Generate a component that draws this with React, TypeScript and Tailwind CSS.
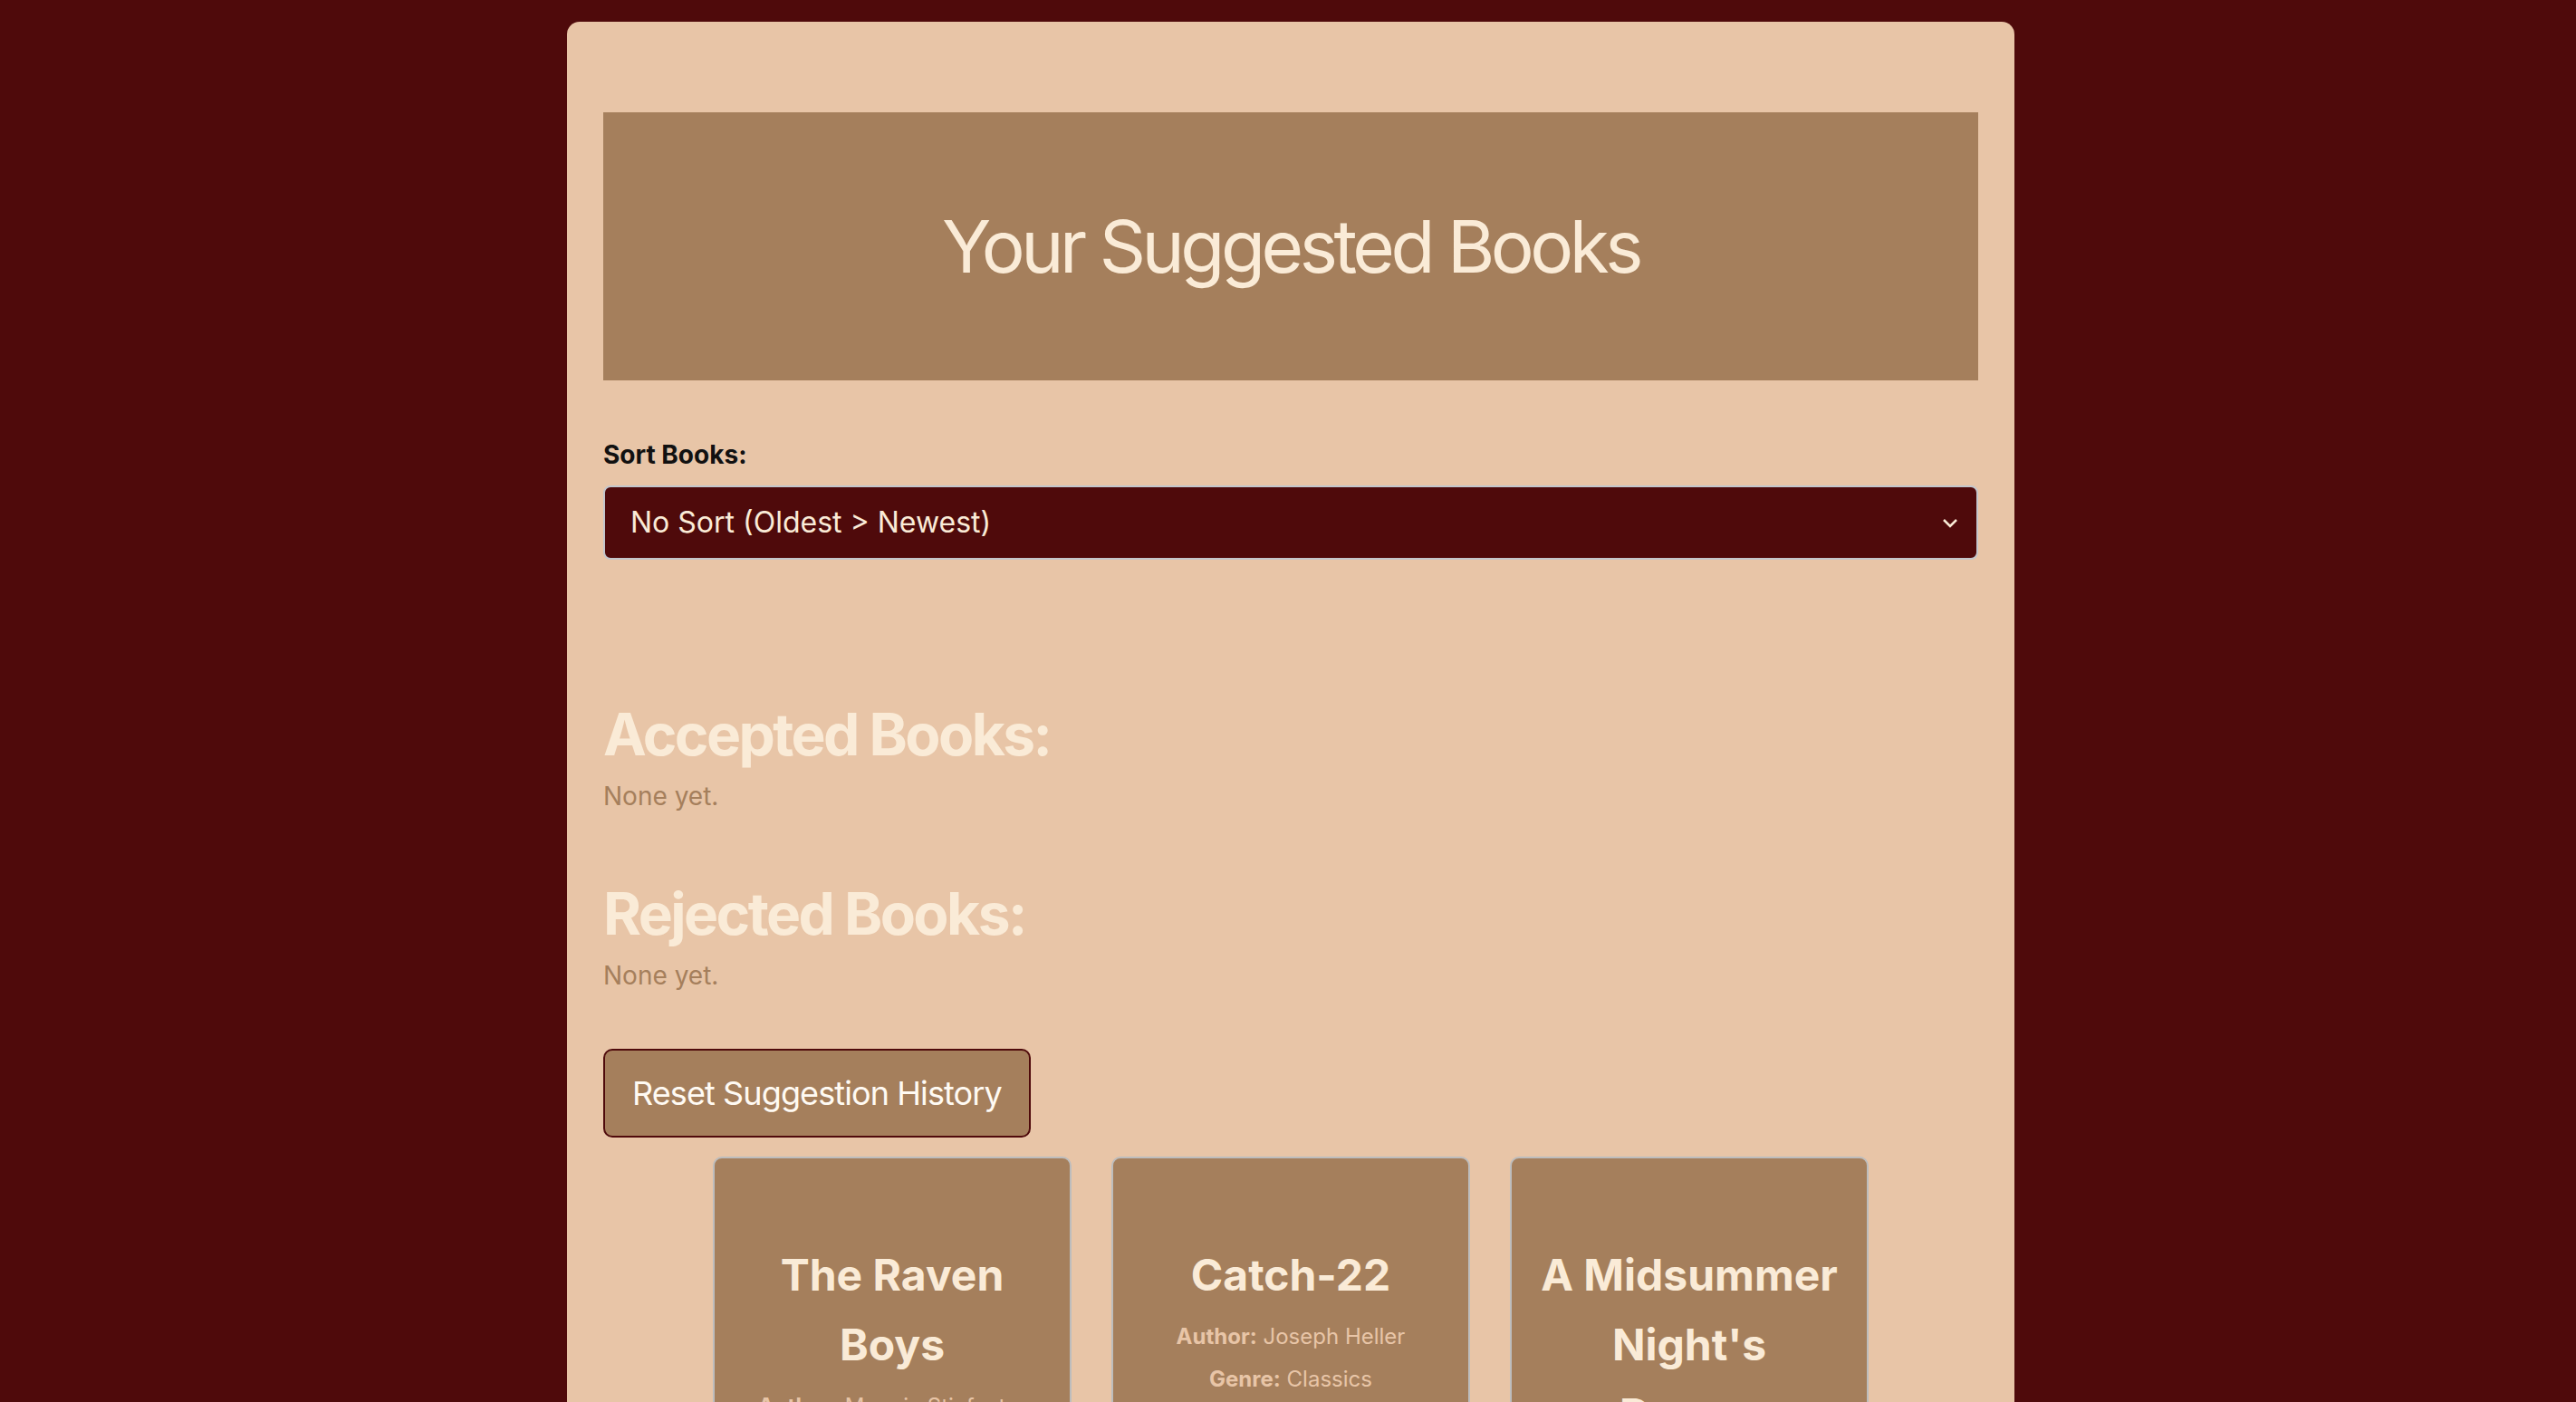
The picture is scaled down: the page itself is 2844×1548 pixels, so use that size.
import { useState } from 'react';

type Book = {
  title: string;
  author: string;
  genre: string;
  description: string;
};

const books: Book[] = [
  {
    title: 'The Raven Boys',
    author: 'Maggie Stiefvater',
    genre: 'Fantasy',
    description: 'Blue Sargent has been told all her life that if she kisses her true love, he will die.',
  },
  {
    title: 'Catch-22',
    author: 'Joseph Heller',
    genre: 'Classics',
    description: 'A satirical novel set during World War II about a bombardier trying to stay alive.',
  },
  {
    title: "A Midsummer Night's Dream",
    author: 'William Shakespeare',
    genre: 'Classics',
    description: 'Four young lovers and a troupe of actors wander into an enchanted forest.',
  },
];

export default function App() {
  const [sort, setSort] = useState('none');
  const [accepted, setAccepted] = useState<string[]>([]);
  const [rejected, setRejected] = useState<string[]>([]);

  const reset = () => {
    setAccepted([]);
    setRejected([]);
  };

  return (
    <div className="min-h-screen bg-[#4f0a0b] pt-[24px] font-['Inter','Liberation_Sans',sans-serif]">
      <div className="mx-auto w-[1598px] translate-x-[3px] rounded-t-[14px] bg-[#e8c5a7] px-[40px] pt-[100px] pb-[40px]">
        <div className="flex h-[296px] items-center justify-center bg-[#a57f5c]">
          <h1 className="text-[80px] leading-none font-normal tracking-[-0.056em] text-[#faebd7]">
            Your Suggested Books
          </h1>
        </div>

        <label className="mt-[62px] block text-[28px] leading-[40px] font-bold text-[#111]">Sort Books:</label>
        <div className="relative mt-[14px]">
          <select
            value={sort}
            onChange={(e) => setSort(e.target.value)}
            className="h-[82px] w-full appearance-none rounded-[8px] border-2 border-[#c3c6cc] bg-[#4f0a0b] pl-[28px] text-[32px] text-[#faebd7] outline-none"
          >
            <option value="none">No Sort (Oldest &gt; Newest)</option>
            <option value="title">Title (A &gt; Z)</option>
            <option value="author">Author (A &gt; Z)</option>
          </select>
          <svg
            className="pointer-events-none absolute top-[36px] right-[22px]"
            width="18"
            height="11"
            viewBox="0 0 18 11"
            fill="none"
          >
            <path d="M2 2l7 7 7-7" stroke="#faebd7" strokeWidth="2.5" />
          </svg>
        </div>

        <h2 className="mt-[153px] text-[64px] leading-[80px] font-bold tracking-[-0.04em] text-[#faebd7]">
          Accepted Books:
        </h2>
        <p className="mt-[8px] text-[28px] leading-[40px] text-[#a57f5c]">
          {accepted.length ? accepted.join(', ') : 'None yet.'}
        </p>

        <h2 className="mt-[70px] text-[64px] leading-[80px] font-bold tracking-[-0.04em] text-[#faebd7]">
          Rejected Books:
        </h2>
        <p className="mt-[8px] text-[28px] leading-[40px] text-[#a57f5c]">
          {rejected.length ? rejected.join(', ') : 'None yet.'}
        </p>

        <button
          onClick={reset}
          className="mt-[61px] h-[98px] rounded-[10px] border-2 border-[#4f0a0b] bg-[#a57f5c] px-[30px] text-[36px] tracking-[-0.025em] text-[#fffaf3]"
        >
          Reset Suggestion History
        </button>

        <div className="mt-[21px] flex justify-center gap-[44px]">
          {books.map((b) => (
            <div
              key={b.title}
              className="w-[396px] rounded-[10px] border-2 border-[#bdbdbd] bg-[#a57f5c] px-[31px] pt-[90px] pb-[40px] text-center"
            >
              <h3 className="text-[48px] leading-[77px] font-bold tracking-normal text-[#faebd7]">{b.title}</h3>
              <p className="mt-[6px] text-[24px] leading-[47px] text-[#e8c5a7]">
                <span className="font-bold">Author:</span> {b.author}
              </p>
              <p className="text-[24px] leading-[47px] text-[#e8c5a7]">
                <span className="font-bold">Genre:</span> {b.genre}
              </p>
              <p className="mt-[16px] text-[24px] leading-[36px] text-[#faebd7]">{b.description}</p>
              <div className="mt-[24px] flex justify-center gap-[16px]">
                <button
                  onClick={() => setAccepted([...accepted, b.title])}
                  className="rounded-[8px] border-2 border-[#4f0a0b] bg-[#e8c5a7] px-[24px] py-[10px] text-[26px] text-[#4f0a0b]"
                >
                  Accept
                </button>
                <button
                  onClick={() => setRejected([...rejected, b.title])}
                  className="rounded-[8px] border-2 border-[#4f0a0b] bg-[#4f0a0b] px-[24px] py-[10px] text-[26px] text-[#faebd7]"
                >
                  Reject
                </button>
              </div>
            </div>
          ))}
        </div>
      </div>
    </div>
  );
}
